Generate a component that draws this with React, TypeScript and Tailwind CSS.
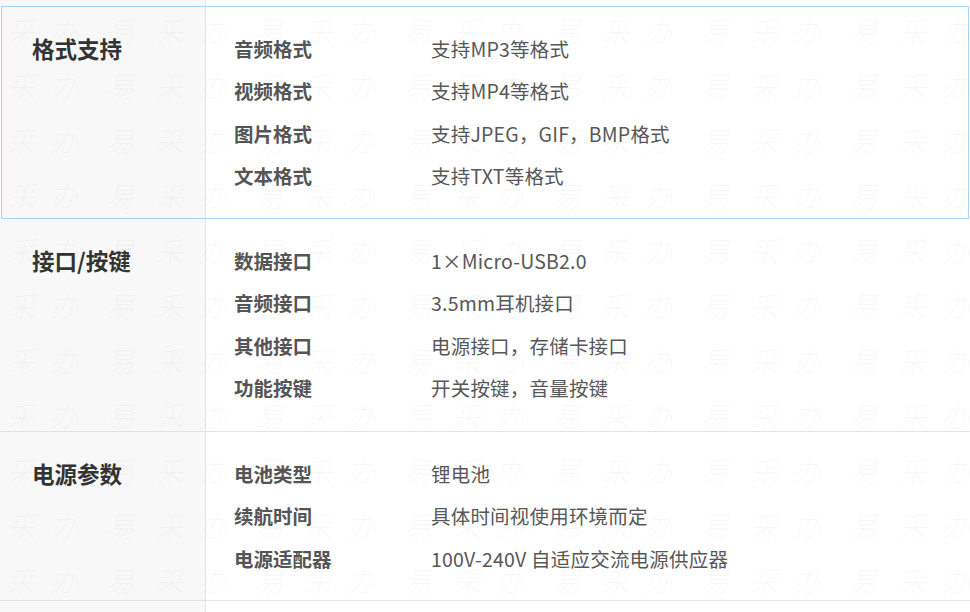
import React from 'react';

type Spec = { label: string; value: string };
type Group = { title: string; rows: Spec[]; height: string; active?: boolean };

const groups: Group[] = [
  {
    title: '格式支持',
    height: 'h-[213px]',
    active: true,
    rows: [
      { label: '音频格式', value: '支持MP3等格式' },
      { label: '视频格式', value: '支持MP4等格式' },
      { label: '图片格式', value: '支持JPEG，GIF，BMP格式' },
      { label: '文本格式', value: '支持TXT等格式' },
    ],
  },
  {
    title: '接口/按键',
    height: 'h-[213px]',
    rows: [
      { label: '数据接口', value: '1×Micro-USB2.0' },
      { label: '音频接口', value: '3.5mm耳机接口' },
      { label: '其他接口', value: '电源接口，存储卡接口' },
      { label: '功能按键', value: '开关按键，音量按键' },
    ],
  },
  {
    title: '电源参数',
    height: 'h-[169px]',
    rows: [
      { label: '电池类型', value: '锂电池' },
      { label: '续航时间', value: '具体时间视使用环境而定' },
      { label: '电源适配器', value: '100V-240V 自适应交流电源供应器' },
    ],
  },
];

// faint repeating watermark laid over the whole table
const Watermark = () => {
  const rows = Array.from({ length: 11 });
  const tiles = Array.from({ length: 8 });
  return (
    <div className="pointer-events-none absolute inset-0 overflow-hidden pt-[16px]">
      {rows.map((_, r) => (
        <div key={r} className="flex h-[55px] -ml-[42px] text-[28px] leading-none font-light italic text-[rgba(0,0,0,0.038)]">
          {tiles.map((_, t) => (
            <div key={t} className="flex w-[148.6px] shrink-0">
              <span className="w-[49px] shrink-0">易</span>
              <span className="w-[43px] shrink-0">采</span>
              <span className="shrink-0">办</span>
            </div>
          ))}
        </div>
      ))}
    </div>
  );
};

const Section = ({ group }: { group: Group }) => {
  return (
    <div
      className={
        group.active
          ? `flex ${group.height} ml-[1px] w-[968px] border border-[#a9d2fb]`
          : `flex ${group.height} w-[970px] border-b border-[#e3e3e3]`
      }
    >
      <div
        className={
          group.active
            ? 'w-[204px] shrink-0 border-r border-[#e3e3e3] bg-[#f8f8f8] pl-[30px] pt-[26px]'
            : 'w-[206px] shrink-0 border-r border-[#e3e3e3] bg-[#f8f8f8] pl-[32px] pt-[26px]'
        }
      >
        <h3 className="text-[22.5px] leading-[30px] font-bold text-[#333]">{group.title}</h3>
      </div>
      <div className="flex flex-col pl-[28px] pt-[20px]">
        {group.rows.map((row) => (
          <div key={row.label} className="flex h-[42.6px] items-center">
            <span className="w-[197px] shrink-0 text-[19.5px] font-bold text-[#555]">{row.label}</span>
            <span className="text-[19.5px] tracking-[0.2px] text-[#585858]">{row.value}</span>
          </div>
        ))}
      </div>
    </div>
  );
};

export default function App() {
  return (
    <div className="relative h-[612px] w-[970px] overflow-hidden bg-white font-['Noto_Sans_CJK_SC','Noto_Sans',sans-serif]">
      <div className="flex flex-col">
        <div className="flex h-[6px]">
          <div className="w-[206px] border-r border-[#e3e3e3] bg-[#f8f8f8]" />
        </div>
        {groups.map((g) => (
          <Section key={g.title} group={g} />
        ))}
        <div className="flex h-[12px]">
          <div className="w-[206px] border-r border-[#e3e3e3] bg-[#f8f8f8]" />
        </div>
      </div>
      <Watermark />
    </div>
  );
}
